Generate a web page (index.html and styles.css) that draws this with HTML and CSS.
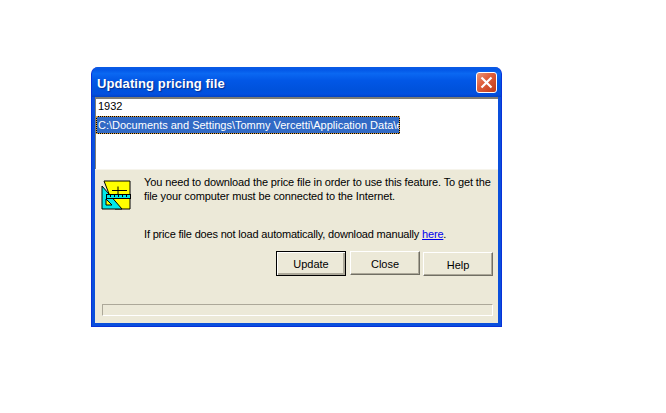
FILE: index.html
```html
<!DOCTYPE html>
<html lang="en">
<head>
<meta charset="UTF-8">
<title>Updating pricing file</title>
<link rel="stylesheet" href="styles.css">
</head>
<body>

<div class="window">
    <div class="titlebar">
        <span class="title">Updating pricing file</span>
        <div class="close-btn">
            <svg width="13" height="13" viewBox="0 0 13 13">
                <path d="M1.5 1.5L11.5 11.5M11.5 1.5L1.5 11.5" stroke="#fff" stroke-width="2.2" fill="none"/>
            </svg>
        </div>
    </div>
    <div class="listbox">
        <div class="row">1932</div>
        <div class="row selected">C:\Documents and Settings\Tommy Vercetti\Application Data\e</div>
    </div>
    <div class="panel">
        <div class="message">
            <svg class="icon" width="31" height="31" viewBox="0 0 31 31">
                <path d="M3 1H29V29H14Z" fill="#ffff00" stroke="#000"/>
                <path d="M17 6.500V15M11 10.500H26" stroke="#000" fill="none"/>
                <path d="M1 6L21 29H1Z" fill="#00e8e8" stroke="#000"/>
                <path d="M5 19L11 25H5Z" fill="#ffff00" stroke="#000"/>
                <rect x="5.500" y="14.500" width="24" height="4" fill="#00e8e8" stroke="#000"/>
                <path d="M9.500 15V17M13.500 15V17M17.500 15V17M21.500 15V17M25.500 15V17" stroke="#000" fill="none"/>
            </svg>
            <div class="text">
                <p class="intro">You need to download the price file in order to use this feature. To get the file your computer must be connected to the Internet.</p>
                <p class="manual">If price file does not load automatically, download manually <a href="#">here</a>.</p>
            </div>
        </div>
        <div class="buttons">
            <button class="default">Update</button>
            <button>Close</button>
            <button class="help">Help</button>
        </div>
        <div class="progress"></div>
    </div>
</div>

</body>
</html>
```

FILE: styles.css
```css
/* Basic CSS styles */
body {
    font-family: "Liberation Sans", Arial, sans-serif;
    font-size: 11px;
    background-color: #fff;
    color: #000;
    margin: 0;
    padding: 67px 0 0 91px;
}

.window {
    width: 411px;
    height: 260px;
    box-sizing: border-box;
    display: flex;
    flex-direction: column;
    padding: 0 3px 3px;
    background-color: #0a4fdc;
    border-left: 1px solid #0831d9;
    border-right: 1px solid #0831d9;
    border-bottom: 1px solid #0831d9;
    border-radius: 7px 7px 0 0;
}

.titlebar {
    height: 30px;
    margin: 0 -3px;
    padding: 0 4px 0 5px;
    display: flex;
    align-items: center;
    justify-content: space-between;
    border-radius: 7px 7px 0 0;
    background: linear-gradient(to bottom, #0a5ae4 0%, #0458e8 10%, #0a68f2 22%, #0257e6 45%, #0052dc 75%, #0250e0 90%, #0443c4 100%);
}

.title {
    color: #fff;
    font-size: 13px;
    font-weight: bold;
    letter-spacing: 0.1px;
    padding-top: 2px;
    text-shadow: 1px 1px 1px #0a2f90;
}

.close-btn {
    width: 21px;
    height: 21px;
    box-sizing: border-box;
    display: flex;
    align-items: center;
    justify-content: center;
    border: 1px solid #fff;
    border-radius: 3px;
    background: linear-gradient(135deg, #e8987c 0%, #e0603c 40%, #c03a18 100%);
}

.listbox {
    height: 72px;
    box-sizing: border-box;
    background-color: #fff;
    border-top: 2px solid #7f7d74;
    border-left: 1px solid #7f7d74;
    padding-top: 1px;
    overflow: hidden;
}

.row {
    height: 15px;
    line-height: 13px;
    padding-left: 2px;
}

.selected {
    width: 304px;
    height: 18px;
    line-height: 16px;
    box-sizing: border-box;
    padding-left: 1px;
    color: #fff;
    background-color: #316ac5;
    border: 1px solid #000;
    outline: 1px dotted #e0a040;
    outline-offset: -1px;
    margin-top: 1px;
    white-space: nowrap;
    overflow: hidden;
}

.panel {
    flex: 1;
    background-color: #ece9d8;
    border-top: 1px solid #f6f4ec;
    padding: 0 5px 0 7px;
    display: flex;
    flex-direction: column;
}

.message {
    display: flex;
    height: 81px;
    padding-top: 5px;
    box-sizing: border-box;
}

.icon {
    flex: none;
    margin: 5px 12px 0 -1px;
}

.text p {
    margin: 0;
    line-height: 14px;
    letter-spacing: -0.12px;
}

.intro {
    width: 352px;
}

.text .manual {
    margin-top: 24px;
    letter-spacing: -0.18px;
}

a {
    color: #0000ee;
}

.buttons {
    display: flex;
    justify-content: flex-end;
    gap: 4px;
    height: 53px;
    align-items: flex-start;
}

button {
    width: 70px;
    height: 24px;
    font-family: "Liberation Sans", Arial, sans-serif;
    font-size: 11px;
    color: #000;
    background-color: #ece9d8;
    border: 1px solid;
    border-color: #fff #716f64 #716f64 #fff;
    box-shadow: inset -1px -1px 0 #aca899;
    padding: 1px 0 0;
}

button.default {
    height: 25px;
    padding: 0;
    border-color: #000;
    box-shadow: inset 1px 1px 0 #fff, inset -2px -2px 0 #aca899;
}

button.help {
    margin-top: 1px;
    margin-left: -1px;
}

.progress {
    height: 12px;
    box-sizing: border-box;
    border: 1px solid;
    border-color: #aca899 #fff #fff #aca899;
}
```
